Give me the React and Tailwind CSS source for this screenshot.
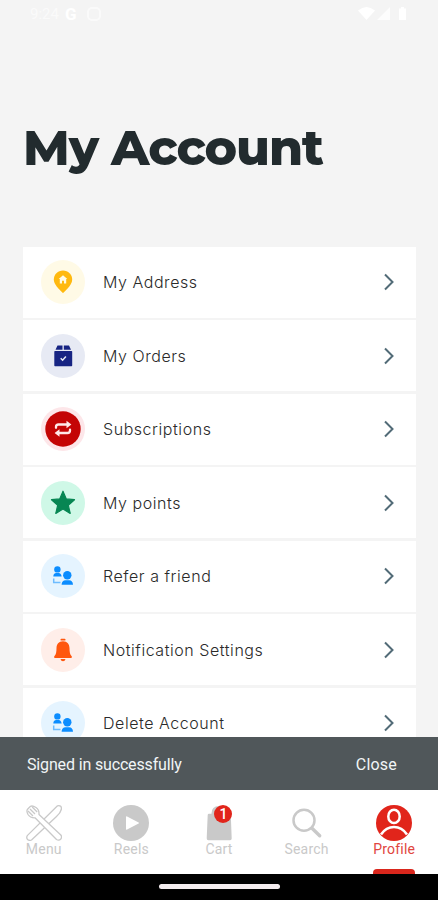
import { useState } from 'react';

const PinIcon = () => (
  <svg viewBox="0 0 44 44" className="h-11 w-11">
    <path
      d="M22 10.500c-5.200 0-9.200 4-9.200 9.200C12.800 25.500 22 33 22 33s9.200-7.500 9.200-13.300C31.200 14.500 27.200 10.500 22 10.500Z"
      fill="#ffb90f"
    />
    <path d="M22 15.300l-4.300 3.800h1.100v4.300h2.200v-2.700h2v2.700h2.200v-4.300h1.100z" fill="#fffbe6" />
  </svg>
);

const BoxIcon = () => (
  <svg viewBox="0 0 44 44" className="h-11 w-11" fill="#172483">
    <path d="M16.500 11.500h5v4.200h-7z" />
    <path d="M22.800 11.500h5.200l2 4.200h-7.200z" />
    <rect x="13.300" y="17" width="17.900" height="15.200" rx=".7" />
    <path d="m19.700 24.300 1.900 1.900 3.300-3.600" fill="none" stroke="#e7eaf4" strokeWidth="1.500" />
  </svg>
);

const RepeatIcon = () => (
  <svg viewBox="0 0 44 44" className="h-11 w-11">
    <circle cx="22" cy="22" r="17.700" fill="#c40505" />
    <g fill="none" stroke="#ffe9e9" strokeWidth="2.300" strokeLinejoin="round" strokeLinecap="round">
      <path d="M15 20.800v-.8q0-2.500 2.500-2.500H26" />
      <path d="M29 22.700v.8q0 2.500-2.500 2.500H18" />
    </g>
    <path d="M25.500 13.700 30.400 17.500l-4.900 3.800zM18.500 22.200 13.600 26l4.900 3.800z" fill="#ffe9e9" />
  </svg>
);

const StarIcon = () => (
  <svg viewBox="0 0 44 44" className="h-11 w-11">
    <path
      d="m22 10.200 3.300 7.700 8.200.8-6.200 5.500 1.900 8.200-7.200-4.300-7.200 4.300 1.900-8.200-6.200-5.500 8.200-.8z"
      fill="#078653"
      stroke="#078653"
      strokeWidth="1.200"
      strokeLinejoin="round"
    />
  </svg>
);

const PeopleIcon = () => (
  <svg viewBox="0 0 44 44" className="h-11 w-11" fill="#0c8dff">
    <circle cx="16.400" cy="15.400" r="3.200" />
    <path d="M12.300 22.600q0-3.500 3-3.500h2.300q2.500 0 3 3.500z" />
    <path d="M12.700 24.500v4h6.800" fill="none" stroke="#6ebcff" strokeWidth="1.500" />
    <circle cx="26.300" cy="21.300" r="4.200" />
    <path d="M20.600 30.800q.2-4.500 4-4.500h3.400q3.800 0 4 4.500z" />
  </svg>
);

const BellIcon = () => (
  <svg viewBox="0 0 44 44" className="h-11 w-11" fill="#ff570e">
    <rect x="19.500" y="10.700" width="5" height="1.900" rx=".9" />
    <path d="M22 13.200c-4.300 0-6.500 3-6.500 6.800 0 4.200-.5 6.300-2 8.100-.8 1-.5 1.900.5 1.900h16c1 0 1.300-.9.5-1.900-1.500-1.800-2-3.900-2-8.100 0-3.800-2.200-6.800-6.500-6.800Z" />
    <path d="M19.500 31h5q-.5 2.200-2.500 2.200T19.500 31Z" />
  </svg>
);

const menuItems = [
  { label: 'My Address', icon: PinIcon, bg: 'bg-[#fffae6]' },
  { label: 'My Orders', icon: BoxIcon, bg: 'bg-[#e7eaf4]' },
  { label: 'Subscriptions', icon: RepeatIcon, bg: 'bg-[#fde6e9]' },
  { label: 'My points', icon: StarIcon, bg: 'bg-[#cff8e7]' },
  { label: 'Refer a friend', icon: PeopleIcon, bg: 'bg-[#e5f4ff]' },
  { label: 'Notification Settings', icon: BellIcon, bg: 'bg-[#ffeee9]' },
  { label: 'Delete Account', icon: PeopleIcon, bg: 'bg-[#e5f4ff]' },
];

const MenuTabIcon = () => (
  <svg viewBox="0 0 36 36" className="h-9 w-9" fill="#fff" stroke="#c9c9c9" strokeWidth="1.300" strokeLinejoin="round">
    <path d="M31.500.8Q36 0 35.300 4.500 34.500 8 30.500 11.500L5.500 35q-2 1-4-.6-1.500-2 0-4z" />
    <path d="M4.500 1.300 1.300 4.500Q.3 6.500 2 9.500q2.200 3.500 7 3.300l21.500 21.700q2.500 1.500 4.300-.5 1.500-2 0-4L13 9.500q.3-5-3-7Q6.500.300 4.500 1.300Z" />
    <path d="m4 4 5 5M6.200 2l5 5M2 6l5 5" />
  </svg>
);

const ReelsIcon = () => (
  <svg viewBox="0 0 36 36" className="h-9 w-9">
    <circle cx="18" cy="18" r="18" fill="#c9c9c9" />
    <path d="M13 12q0-1.200 1.100-.6l11.500 6q1 .6 0 1.200l-11.500 6q-1.100.6-1.100-.6z" fill="#fff" />
  </svg>
);

const CartIcon = () => (
  <svg viewBox="0 0 36 36" className="h-9 w-9" fill="#c9c9c9">
    <path d="M10.500 12V8.500Q10.500 1 18 1t7.500 7.500V12z" />
    <path d="M8 8.800h20.500q1.200 0 1.300 1.200l.9 23.500q0 1.700-1.700 1.700H7.500q-1.900 0-1.800-1.900L6.700 10q.1-1.200 1.300-1.200Z" />
  </svg>
);

const SearchIcon = () => (
  <svg viewBox="0 0 36 36" className="h-9 w-9" fill="none" stroke="#c9c9c9">
    <circle cx="15" cy="15.200" r="10.500" strokeWidth="2.500" />
    <path d="m23 23.300 7.700 7.500" strokeWidth="3.400" strokeLinecap="round" />
  </svg>
);

const ProfileIcon = () => (
  <svg viewBox="0 0 36 36" className="h-9 w-9">
    <circle cx="18" cy="18" r="18" fill="#e1251b" />
    <ellipse cx="18" cy="11.400" rx="5.700" ry="6.700" fill="none" stroke="#fff" strokeWidth="2.500" />
    <path d="M5 29.500Q10 22 18 22t13 7.500" fill="none" stroke="#fff" strokeWidth="2.500" />
  </svg>
);

const tabs = [
  { label: 'Menu', icon: MenuTabIcon },
  { label: 'Reels', icon: ReelsIcon },
  { label: 'Cart', icon: CartIcon, badge: 1 },
  { label: 'Search', icon: SearchIcon },
  { label: 'Profile', icon: ProfileIcon },
];

function StatusBar() {
  return (
    <div className="flex h-7 items-center justify-between px-[30px] text-white">
      <div className="flex items-center gap-[6px] font-[Roboto,sans-serif] text-[15px] leading-none">
        <span className="opacity-60">9:24</span>
        <span className="text-[17px] font-bold">G</span>
        <svg viewBox="0 0 14 14" className="ml-1 h-[14px] w-[14px] opacity-60">
          <rect x="1" y="1" width="12" height="12" rx="4" fill="none" stroke="#fff" strokeWidth="2" />
        </svg>
      </div>
      <svg viewBox="0 0 50 14" className="h-[14px] w-[50px]" fill="#fff">
        <path d="M0 3.500q8.500-7 17 0L8.500 13z" />
        <path d="M19 13 32 0v13z" opacity=".8" />
        <path d="M41 1.500h2V0h3v1.500h2V13h-7z" />
      </svg>
    </div>
  );
}

export default function App() {
  const [activeTab, setActiveTab] = useState('Profile');

  return (
    <div className="flex h-[900px] w-full flex-col overflow-hidden bg-[#f4f4f4]">
      <StatusBar />

      {/* Title */}
      <header className="h-[218.500px] shrink-0 pl-[23px] pt-[90px]">
        <h1 className="whitespace-nowrap font-[Montserrat,Inter,sans-serif] text-[49px] font-extrabold leading-[60px] tracking-[-1.1px] text-[#222b2e]">
          My Account
        </h1>
      </header>

      {/* Account links */}
      <main className="flex min-h-0 flex-1 flex-col gap-[2.500px] overflow-hidden pl-[23px] pr-[22.500px]">
        {menuItems.map(({ label, icon: Icon, bg }) => (
          <button
            key={label}
            className="flex h-[71px] shrink-0 items-center bg-white pl-[18px] pr-[22px] text-left"
          >
            <span className={`h-11 w-11 overflow-hidden rounded-full ${bg}`}>
              <Icon />
            </span>
            <span className="ml-[18px] flex-1 font-[Inter,sans-serif] text-[16px] font-light tracking-[0.55px] text-[#2a2a2a]">
              {label}
            </span>
            <svg viewBox="0 0 10 18" className="h-[18px] w-[10px]">
              <path d="m1 1.500 7.500 7.500L1 16.500" fill="none" stroke="#526b77" strokeWidth="2" />
            </svg>
          </button>
        ))}
      </main>

      {/* Snackbar */}
      <div className="flex h-[53px] shrink-0 items-center justify-between bg-[#50575a] pl-[27px] pr-[41px] pt-[2px] font-[Roboto,sans-serif] text-[16px] text-[#f1f5f6]">
        <span className="tracking-[-0.15px]">Signed in successfully</span>
        <button className="tracking-[0.2px]">Close</button>
      </div>

      {/* Bottom tabs */}
      <nav className="flex h-[84px] shrink-0 bg-white">
        {tabs.map(({ label, icon: Icon, badge }) => {
          const active = activeTab === label;
          return (
            <button
              key={label}
              onClick={() => setActiveTab(label)}
              className="relative flex flex-1 flex-col items-center pt-[15px]"
            >
              <span className="relative">
                <Icon />
                {badge && (
                  <span className="absolute left-[13.500px] top-0 flex h-[18px] w-[18px] items-center justify-center rounded-full bg-[#e1251b] font-[Roboto,sans-serif] text-[14px] font-medium leading-none text-white">
                    {badge}
                  </span>
                )}
              </span>
              <span
                className={`font-[Roboto,sans-serif] text-[14px] leading-[16px] tracking-[0.2px] ${
                  active ? 'text-[#e1453e]' : 'text-[#c9c9c9]'
                }`}
              >
                {label}
              </span>
              {active && (
                <span className="absolute bottom-0 h-[5px] w-[42px] rounded-t-[4px] bg-[#d9261c]" />
              )}
            </button>
          );
        })}
      </nav>

      {/* Gesture bar */}
      <div className="flex h-[26px] shrink-0 justify-center bg-black pt-[10px]">
        <div className="h-[5px] w-[121px] rounded-full bg-[#f3ecee]" />
      </div>
    </div>
  );
}
